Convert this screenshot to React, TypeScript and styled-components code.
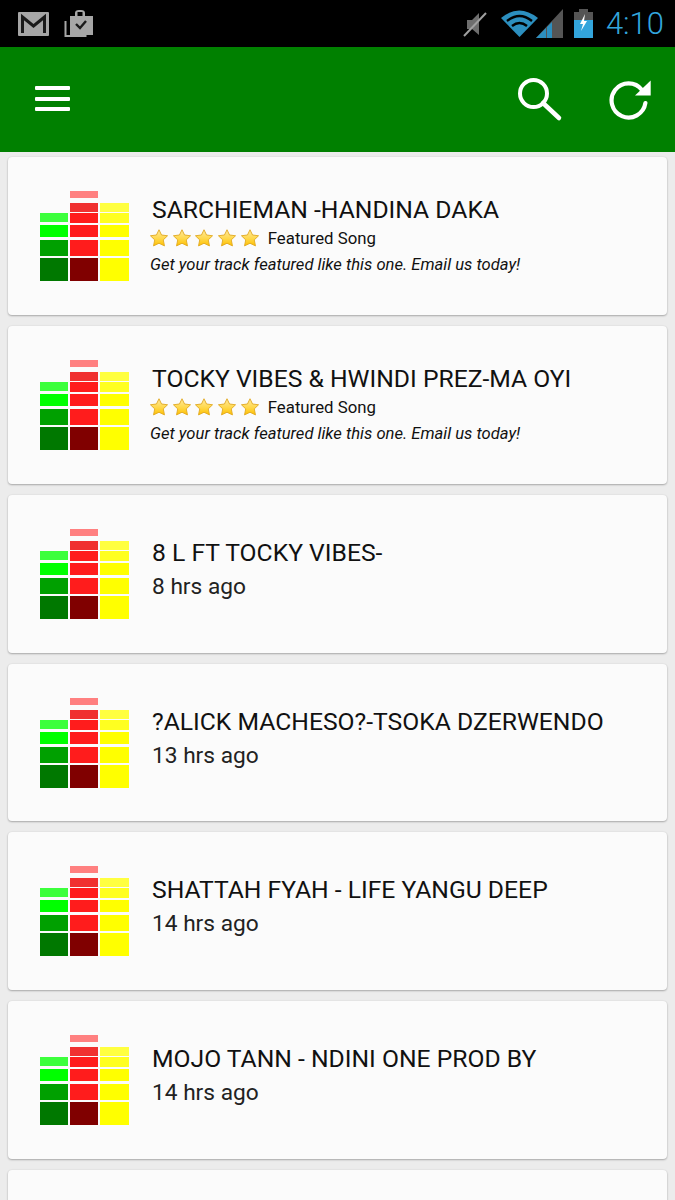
import React from 'react';
import styled, { createGlobalStyle } from 'styled-components';

const GlobalStyle = createGlobalStyle`
    html, body {
        margin: 0;
        padding: 0;
        background: #ececec;
        font-family: Roboto, "Liberation Sans", sans-serif;
    }
`;

const Screen = styled.div`
    width: 675px;
    height: 1200px;
    overflow: hidden;
    display: flex;
    flex-direction: column;
    background: #ececec;
`;

const StatusBar = styled.div`
    flex: 0 0 47px;
    background: #000;
    display: flex;
    align-items: center;
    padding: 0 11px 0 18px;
    box-sizing: border-box;
`;

const StatusLeft = styled.div`
    display: flex;
    align-items: center;
    gap: 15px;
    flex-grow: 1;
`;

const StatusRight = styled.div`
    display: flex;
    align-items: center;
    gap: 11px;
`;

const Clock = styled.span`
    color: #33a5dc;
    font-size: 31px;
    font-weight: 300;
    margin-left: 2px;
`;

const MuteSlot = styled.span`
    display: flex;
    margin-right: 3px;
`;

const Header = styled.header`
    flex: 0 0 105px;
    background: #008000;
    display: flex;
    align-items: center;
    padding: 0 24px 0 35px;
    box-sizing: border-box;
    margin-bottom: 5px;
`;

const MenuButton = styled.div`
    display: flex;
    flex-direction: column;
    gap: 6.5px;
    flex-grow: 1;
    margin-bottom: 2px;
`;

const MenuLine = styled.span`
    display: block;
    width: 35px;
    height: 4px;
    background: #fff;
    border-radius: 1px;
`;

const HeaderActions = styled.div`
    display: flex;
    align-items: center;
    gap: 46px;
`;

const List = styled.div`
    display: flex;
    flex-direction: column;
    gap: 11px;
    padding: 0 8px;
`;

const Card = styled.div`
    flex: 0 0 157.85px;
    min-height: 0;
    box-sizing: border-box;
    background: #fbfbfb;
    border-radius: 4px;
    box-shadow: 0 1px 2px rgba(0, 0, 0, 0.28), 0 0 2px rgba(0, 0, 0, 0.08);
    display: flex;
    padding-left: 32px;
    color: #111;
`;

const Meter = styled.svg`
    margin-top: 34px;
    flex-shrink: 0;
`;

const Body = styled.div<{ $featured: boolean }>`
    margin-left: 23px;
    padding-top: ${({ $featured }) => ($featured ? '38px' : '43px')};
    display: flex;
    flex-direction: column;
`;

const Title = styled.div`
    font-size: 24.7px;
    line-height: 30px;
    white-space: nowrap;
`;

const RatingRow = styled.div`
    display: flex;
    align-items: center;
    height: 24px;
    margin-left: -2px;
    margin-top: 1px;
`;

const Stars = styled.div`
    display: flex;
    gap: 4.7px;
`;

const RatingLabel = styled.span`
    font-size: 16.8px;
    margin-left: 9px;
`;

const Promo = styled.div`
    font-size: 16.6px;
    font-style: italic;
    line-height: 24px;
    margin-left: -2px;
    margin-top: 3px;
    white-space: nowrap;
`;

const Age = styled.div`
    font-size: 22.7px;
    line-height: 30px;
    margin-top: 4px;
    color: #222;
`;

const bars: [number, number, number, string][] = [
    [0, 56, 9, '#3cff3c'], [0, 68, 12, '#00ff00'], [0, 83, 16, '#00a000'], [0, 101, 23, '#007800'],
    [30, 34, 7, '#ff8080'], [30, 46, 9, '#f03030'], [30, 56, 10, '#ff1c1c'], [30, 68, 12, '#ff1c1c'], [30, 83, 16, '#ff1c1c'], [30, 101, 23, '#800000'],
    [60, 46, 9, '#ffff40'], [60, 56, 10, '#ffff20'], [60, 68, 12, '#ffff00'], [60, 83, 16, '#ffff00'], [60, 101, 23, '#ffff00'],
];

const EqualizerIcon = () => (
    <Meter width="89" height="124" viewBox="0 0 89 124">
        {bars.map(([x, y, h, fill]) => (
            <rect key={`${x}-${y}`} x={x} y={y - 34} width={x === 60 ? 29 : 28} height={h} fill={fill} />
        ))}
    </Meter>
);

const Star = () => (
    <svg width="18" height="18" viewBox="0 0 24 24">
        <defs>
            <linearGradient id="starFill" x1="0" y1="0" x2="0" y2="1">
                <stop offset="0" stopColor="#ffe9a0" />
                <stop offset="0.55" stopColor="#ffd84a" />
                <stop offset="1" stopColor="#ffc000" />
            </linearGradient>
        </defs>
        <path
            d="M12 1l3.400 7 8 1-5.700 5.500 1.600 8L12 19l-7.300 3.500 1.600-8L.6 9l8-1z"
            fill="url(#starFill)"
            stroke="#e0a820"
            strokeWidth="1.200"
            strokeLinejoin="round"
        />
    </svg>
);

const MailIcon = () => (
    <svg width="31" height="24" viewBox="0 0 31 24">
        <rect width="31" height="24" rx="1" fill="#a6a6a6" />
        <path d="M4.500 21V5l11 9 11-9v16" fill="none" stroke="#1a1a1a" strokeWidth="3" />
    </svg>
);

const TaskIcon = () => (
    <svg width="30" height="29" viewBox="0 0 30 29">
        <path d="M1.500 12v15h21" fill="none" stroke="#a6a6a6" strokeWidth="2" />
        <path d="M6 7h5V4q0-3 4-3h2q4 0 4 3v3h8v19H6z" fill="#a6a6a6" />
        <rect x="13.500" y="3" width="5" height="4" fill="#000" />
        <path d="M12 15l4 4 6-7" fill="none" stroke="#1a1a1a" strokeWidth="2.400" />
    </svg>
);

const MuteIcon = () => (
    <svg width="24" height="26" viewBox="0 0 24 26">
        <path d="M4 9h5l7-7v22l-7-6H4z" fill="#6e6e6e" />
        <path d="M1 25L23 2" stroke="#a0a0a0" strokeWidth="2" />
    </svg>
);

const SignalIcons = () => (
    <svg width="62" height="29" viewBox="0 0 62 29">
        <path d="M0 9Q18-6 37 9L18.500 28z" fill="#2c8fbf" />
        <path d="M6 12Q18.500 2 31 12M11 17Q18.500 11 26 17" fill="none" stroke="#000" strokeWidth="2.400" />
        <path d="M35 29L62 0v29z" fill="#555" />
        <path d="M35 29l10-10v10zM46 18l5-5v16h-5z" fill="#2c8fbf" />
    </svg>
);

const BatteryIcon = () => (
    <svg width="19" height="30" viewBox="0 0 19 30">
        <rect x="5" y="0" width="9" height="3" fill="#555" />
        <rect x="0" y="3" width="19" height="8" fill="#555" />
        <rect x="0" y="11" width="19" height="18" fill="#33a5dc" />
        <path d="M11 5L6 15h3l-2 7 6-10h-3z" fill="#fff" />
    </svg>
);

const SearchIcon = () => (
    <svg width="46" height="46" viewBox="0 0 46 46">
        <circle cx="16.500" cy="16.500" r="13.500" fill="none" stroke="#fff" strokeWidth="4" />
        <path d="M26 26l16 15" stroke="#fff" strokeWidth="4.500" strokeLinecap="round" />
    </svg>
);

const RefreshIcon = () => (
    <svg width="42" height="42" viewBox="0 0 42 42">
        <path d="M33 11A17 17 0 1 0 36.400 24" fill="none" stroke="#fff" strokeWidth="4.200" strokeLinecap="round" />
        <path d="M41.700 1.500v15H26z" fill="#fff" />
    </svg>
);

interface Track {
    title: string;
    age?: string;
}

const tracks: Track[] = [
    { title: 'SARCHIEMAN -HANDINA DAKA' },
    { title: 'TOCKY VIBES & HWINDI PREZ-MA OYI' },
    { title: '8 L FT TOCKY VIBES-', age: '8 hrs ago' },
    { title: '?ALICK MACHESO?-TSOKA DZERWENDO', age: '13 hrs ago' },
    { title: 'SHATTAH FYAH - LIFE YANGU DEEP', age: '14 hrs ago' },
    { title: 'MOJO TANN - NDINI ONE PROD BY', age: '14 hrs ago' },
];

const TrackCard = ({ title, age }: Track) => (
    <Card>
        <EqualizerIcon />
        <Body $featured={!age}>
            <Title>{title}</Title>
            {age ? (
                <Age>{age}</Age>
            ) : (
                <>
                    <RatingRow>
                        <Stars>
                            <Star />
                            <Star />
                            <Star />
                            <Star />
                            <Star />
                        </Stars>
                        <RatingLabel>Featured Song</RatingLabel>
                    </RatingRow>
                    <Promo>Get your track featured like this one. Email us today!</Promo>
                </>
            )}
        </Body>
    </Card>
);

const App = () => (
    <Screen>
        <GlobalStyle />
        <StatusBar>
            <StatusLeft>
                <MailIcon />
                <TaskIcon />
            </StatusLeft>
            <StatusRight>
                <MuteSlot>
                    <MuteIcon />
                </MuteSlot>
                <SignalIcons />
                <BatteryIcon />
                <Clock>4:10</Clock>
            </StatusRight>
        </StatusBar>
        <Header>
            <MenuButton>
                <MenuLine />
                <MenuLine />
                <MenuLine />
            </MenuButton>
            <HeaderActions>
                <SearchIcon />
                <RefreshIcon />
            </HeaderActions>
        </Header>
        <List>
            {tracks.map((track) => (
                <TrackCard key={track.title} {...track} />
            ))}
            <Card />
        </List>
    </Screen>
);

export default App;
